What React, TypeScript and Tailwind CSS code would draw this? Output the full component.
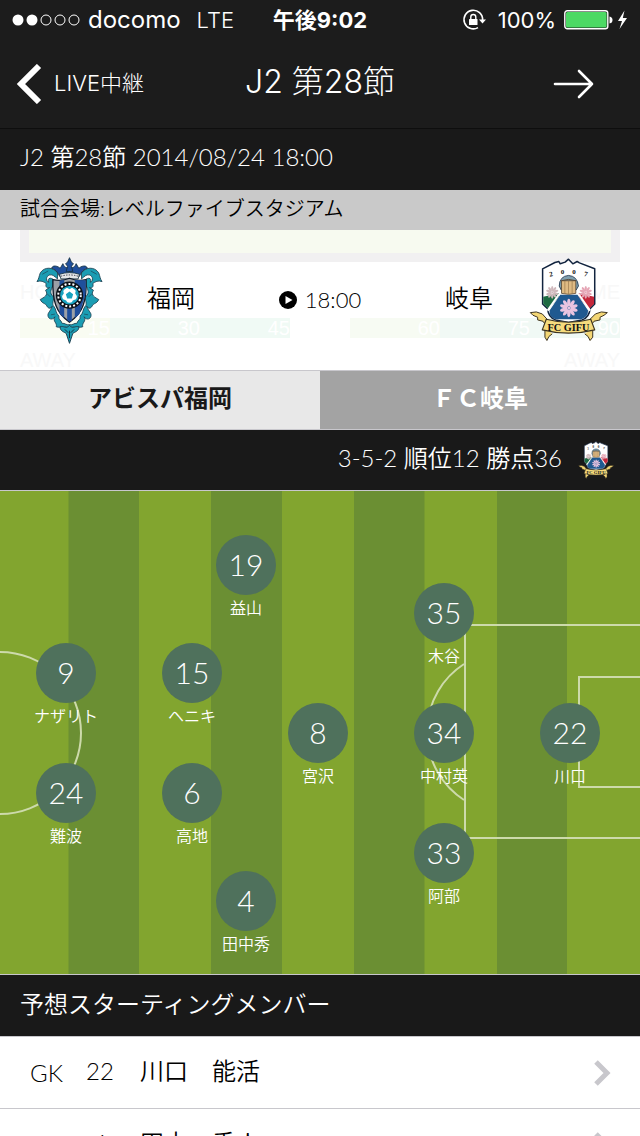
import { useState } from 'react';
import clsx from 'clsx';

interface Player {
  number: number;
  name: string;
  // position on the 640x483 pitch
  x: number;
  y: number;
}

const PITCH_WIDTH = 640;
const PITCH_HEIGHT = 483;

const PLAYERS: Player[] = [
  { number: 19, name: '益山', x: 246, y: 74 },
  { number: 35, name: '木谷', x: 444, y: 122 },
  { number: 9, name: 'ナザリト', x: 66, y: 182 },
  { number: 15, name: 'ヘニキ', x: 192, y: 182 },
  { number: 8, name: '宮沢', x: 318, y: 242 },
  { number: 34, name: '中村英', x: 444, y: 242 },
  { number: 22, name: '川口', x: 570, y: 242 },
  { number: 24, name: '難波', x: 66, y: 302 },
  { number: 6, name: '高地', x: 192, y: 302 },
  { number: 33, name: '阿部', x: 444, y: 362 },
  { number: 4, name: '田中秀', x: 246, y: 410 },
];

const MEMBERS = [
  { position: 'GK', number: 22, name: '川口　能活' },
  { position: 'DF', number: 4, name: '田中　秀人' },
];

const TEAMS = ['アビスパ福岡', 'ＦＣ岐阜'];

const AVISPA_SIDE =
  'M112 66 C100 48 72 46 60 66 C56 76 56 84 50 92 C62 88 70 92 78 98 C74 108 82 114 88 110 L76 118 C86 134 70 140 60 146 C66 160 76 156 80 166 C86 176 94 172 96 166 C90 184 80 186 84 198 C88 208 100 206 104 198 C96 212 112 216 108 228 C118 232 124 226 130 232 C138 226 140 232 148 238 L148 222 C138 224 134 216 126 218 C122 206 114 208 116 196 C106 186 108 176 102 168 C92 160 104 146 98 136 C88 128 92 116 98 104 C106 94 100 82 90 82 C84 82 82 88 86 94 C76 92 76 76 88 72 C98 70 102 76 112 84 Z';

function AvispaCrest({ className }: { className?: string }) {
  return (
    <svg viewBox="48 18 200 262" className={className} role="img" aria-label="アビスパ福岡">
      {[false, true].map(mirrored => (
        <g key={String(mirrored)} transform={mirrored ? 'translate(296 0) scale(-1 1)' : undefined}>
          <path d={AVISPA_SIDE} fill="#1b9db3" stroke="#1c4254" strokeWidth="2.6" strokeLinejoin="round" />
          <path d="M94 52 C98 40 114 46 120 52 L128 38 C134 52 138 50 148 48 L148 76 L118 76 C112 62 104 54 94 52 Z" fill="#1f4f9c" stroke="#14303f" strokeWidth="2.5" />
          <path d="M66 70 L84 60 M80 128 L90 138 M92 192 L104 190" stroke="#1c4254" strokeWidth="2" />
        </g>
      ))}
      <path d="M148 20 L154 34 L160 38 L154 46 L158 62 L138 62 L142 46 L136 38 L142 34 Z" fill="#1f4f9c" stroke="#14303f" strokeWidth="2.5" />
      <path d="M118 70 Q148 60 178 70 L174 84 L122 84 Z" fill="#e4e6e7" stroke="#14303f" strokeWidth="2.5" />
      <path d="M122 76 Q148 68 174 76" stroke="#334" strokeWidth="3" strokeDasharray="4 4" fill="none" />
      <path d="M98 86 Q124 92 148 82 Q172 92 198 86 C200 148 190 186 148 214 C106 186 96 148 98 86 Z" fill="#9ba0a6" stroke="#101a28" strokeWidth="4" />
      <path d="M118 89 L132 87 L132 202 L118 188 Z M164 87 L197 88 L196 130 L178 190 L164 202 Z" fill="#1f4f9c" />
      <path d="M141 170 H155 V210 L148 213 L141 208 Z" fill="#1f4f9c" />
      <circle cx="148" cy="133" r="41" fill="#0c1118" />
      <circle cx="148" cy="133" r="34" fill="none" stroke="#fff" strokeWidth="6" strokeDasharray="6 6" />
      <circle cx="148" cy="133" r="28" fill="#18a3c0" />
      <circle cx="148" cy="133" r="23" fill="#fff" />
      <path d="M148 122 L159 130 L155 143 L141 143 L137 130 Z M148 106 L158 109 L148 115 L138 109 Z M122 128 L128 117 L131 127 L125 137 Z M174 128 L168 117 L165 127 L171 137 Z M133 154 L129 145 L138 149 L143 158 Z M163 154 L167 145 L158 149 L153 158 Z" fill="#18a3c0" />
      <path d="M120 228 C130 224 138 236 148 224 C158 236 166 224 176 228 C178 240 164 244 158 248 L148 278 L138 248 C132 244 118 240 120 228 Z" fill="#1b9db3" stroke="#1c4254" strokeWidth="3" />
      <path d="M134 236 L144 246 M162 236 L152 246 M148 240 V262" stroke="#14303f" strokeWidth="3" />
    </svg>
  );
}

const PETALS = [0, 36, 72, 108, 144, 180, 216, 252, 288, 324];

function Flower({ x, y, size, color }: { x: number; y: number; size: number; color: string }) {
  return (
    <g transform={`translate(${x} ${y}) scale(${size})`}>
      {PETALS.map(angle => (
        <ellipse key={angle} cx="0" cy="-7" rx="2.2" ry="5" fill={color} transform={`rotate(${angle})`} />
      ))}
      <circle r="2" fill={color} />
    </g>
  );
}

function GifuCrest({ className }: { className?: string }) {
  return (
    <svg viewBox="30 28 238 252" className={className} role="img" aria-label="FC岐阜">
      <path d="M71 60 L108 41 L120 38 L124 45 L139 40 L149 31 L162 45 L175 38 L182 42 L228 60 L228 166 L214 180 Q212 206 190 214 L149 222 L110 214 Q88 206 86 180 L71 166 Z" fill="#fff" stroke="#12243f" strokeWidth="4.5" strokeLinejoin="round" />
      <path d="M73 144 L120 134 L120 144 L90 182 L73 165 Z" fill="#1e6b43" />
      <path d="M226 144 L180 134 L180 144 L210 182 L226 165 Z" fill="#c4263a" />
      <path d="M124 138 H176 L208 186 Q208 206 188 212 H110 Q90 206 92 186 Z" fill="#205990" />
      <path d="M121 136 L86 186 M179 136 L214 186" stroke="#fff" strokeWidth="6" />
      <Flower x={100} y={131} size={1.6} color="#cfb8bc" />
      <Flower x={201} y={131} size={1.6} color="#e5a5b5" />
      <Flower x={150} y={178} size={2.3} color="#eac4e0" />
      <path d="M121 112 Q122 82 149 80 Q176 82 179 112 L172 124 H127 Z" fill="#7f9fae" stroke="#19304a" strokeWidth="2.5" />
      <path d="M128 96 H171 V134 Q150 140 128 134 Z" fill="#dfba83" stroke="#5d4a34" strokeWidth="2.5" />
      <path d="M138 96 V135 M149 96 V136 M160 96 V135" stroke="#98764b" strokeWidth="2" />
      <path d="M127 96 Q149 88 172 96" stroke="#5d4a34" strokeWidth="3" fill="none" />
      <g fontFamily='"Liberation Serif", serif' fontWeight="700" fontSize="21" fill="#111">
        <text x="91" y="83" transform="rotate(-12 96 76)">2</text>
        <text x="126" y="75">0</text>
        <text x="160" y="75">0</text>
        <text x="196" y="83" transform="rotate(12 201 76)">7</text>
      </g>
      <path d="M34 192 L52 190 L70 196 L90 218 L78 226 L72 218 L56 214 L56 206 L42 200 Z M266 192 L248 190 L230 196 L208 218 L220 226 L226 218 L244 214 L244 206 L256 200 Z" fill="#f3d675" stroke="#3c3320" strokeWidth="3" strokeLinejoin="round" />
      <path d="M78 238 L78 266 L84 276 L90 264 L100 256 M222 238 L222 266 L214 276 L208 264 L198 256" fill="#f3d675" stroke="#3c3320" strokeWidth="3" strokeLinejoin="round" />
      <path d="M82 212 Q149 230 216 212 L228 244 Q149 264 70 244 Z" fill="#f5db7d" stroke="#3c3320" strokeWidth="3.5" strokeLinejoin="round" />
      <text x="149" y="248" textAnchor="middle" fontFamily='"Liberation Serif", serif' fontWeight="700" fontSize="31" fill="#111">
        FC GIFU
      </text>
    </svg>
  );
}

function StatusBar() {
  return (
    <div className="grid h-10 grid-cols-[1fr_auto_1fr] items-center px-3 font-['Inter','Noto_Sans_CJK_JP',sans-serif] text-[22px] leading-10">
      <div className="flex items-center gap-2">
        <svg className="h-3 w-[68px]" viewBox="0 0 68 12" fill="none" stroke="#fff">
          <circle cx="6" cy="6" r="5.5" fill="#fff" stroke="none" />
          <circle cx="20" cy="6" r="5.5" fill="#fff" stroke="none" />
          <circle cx="34" cy="6" r="5" />
          <circle cx="48" cy="6" r="5" />
          <circle cx="62" cy="6" r="5" />
        </svg>
        <span className="text-2xl leading-10">docomo</span>
        <span className="pl-2 font-light">LTE</span>
      </div>
      <span className="font-bold">午後9:02</span>
      <div className="flex items-center justify-end gap-2">
        <svg className="mr-1 h-6 w-6" viewBox="0 0 24 24" fill="none">
          <path d="M20.6 12 A9.3 9.3 0 1 0 16 19.6" stroke="#fff" strokeWidth="1.6" />
          <path d="M17 11.5 H24 L20.5 15.5 Z" fill="#fff" />
          <rect x="7" y="11" width="8.5" height="6" rx="0.6" fill="#fff" />
          <path d="M8.8 11 V9 a2.5 2.5 0 0 1 5 0 V11" stroke="#fff" strokeWidth="1.4" />
        </svg>
        <span>100%</span>
        <svg className="h-5 w-16" viewBox="0 0 64 20">
          <rect x="0.8" y="0.8" width="43" height="18" rx="2.5" fill="none" stroke="#fff" strokeWidth="1.4" />
          <rect x="2" y="2" width="40.6" height="15.6" rx="1.5" fill="#4cd964" />
          <path d="M45.5 6.5 Q48.5 7 48.5 10 Q48.5 13 45.5 13.5 Z" fill="#fff" />
          <path d="M60.5 0.5 L54 11 H58 L55.5 19 L63 8 H58.8 Z" fill="#fff" />
        </svg>
      </div>
    </div>
  );
}

function NavBar() {
  return (
    <nav className="grid h-[88px] grid-cols-[1fr_auto_1fr] items-center px-4 font-['Inter','Noto_Sans_CJK_JP',sans-serif] font-light">
      <a href="#live" className="flex items-center gap-3 text-[22px]">
        <svg className="h-10 w-[26px]" viewBox="0 0 26 40" fill="none" stroke="#fff" strokeWidth="6">
          <path d="M23 2 L5 20 L23 38" />
        </svg>
        LIVE中継
      </a>
      <h1 className="pb-1 text-[32px] leading-10 font-light">J2 第28節</h1>
      <button type="button" aria-label="次へ" className="mr-7 justify-self-end">
        <svg className="h-8 w-11" viewBox="0 0 44 32" fill="none" stroke="#fff" strokeWidth="2.6" strokeLinecap="round" strokeLinejoin="round">
          <path d="M3 16 H40 M27 3 L40 16 L27 29" />
        </svg>
      </button>
    </nav>
  );
}

function BackdropTimeline() {
  return (
    <div aria-hidden="true" className="absolute inset-0 overflow-hidden px-5 font-['Liberation_Sans',sans-serif] text-xl leading-5">
      <div className="h-8 border-x-9 border-b-9 border-[#f1f0f1] bg-[#f7faf0]" />
      <div className="flex justify-between pt-5 text-[#f8f8f8]">
        <span>HOME</span>
        <span>HOME</span>
      </div>
      <div className="flex justify-between pt-4 text-right text-white">
        <div className="flex w-[45%]">
          <span className="w-1/3 bg-[#f9fcf2]">15</span>
          <span className="w-1/3 bg-[#f2faf5]">30</span>
          <span className="w-1/3 bg-[#f0faf5]">45</span>
        </div>
        <div className="flex w-[45%]">
          <span className="w-1/3 bg-[#f7fbf3]">60</span>
          <span className="w-1/3 bg-[#f1f9f5]">75</span>
          <span className="w-1/3 bg-[#f0f9f5]">90</span>
        </div>
      </div>
      <div className="flex justify-between pt-3 text-[#f8f8f8]">
        <span>AWAY</span>
        <span>AWAY</span>
      </div>
    </div>
  );
}

function MatchCard() {
  return (
    <section className="relative h-[140px] bg-white">
      <BackdropTimeline />
      <div className="relative flex h-full items-center justify-between pr-8 pl-9 font-[350]">
        <div className="flex items-center gap-11">
          <AvispaCrest className="h-[87px] w-[67px]" />
          <span className="pb-1">福岡</span>
        </div>
        <div className="flex items-center gap-2 text-[22px]">
          <svg className="h-[18px] w-[18px]" viewBox="0 0 18 18">
            <circle cx="9" cy="9" r="9" fill="#000" />
            <path d="M6.5 5 L13.5 9 L6.5 13 Z" fill="#fff" />
          </svg>
          <time>18:00</time>
        </div>
        <div className="flex items-center gap-9">
          <span className="pb-1">岐阜</span>
          <GifuCrest className="h-[84px] w-[79px]" />
        </div>
      </div>
    </section>
  );
}

function Pitch() {
  return (
    <section className="relative aspect-[640/483] w-full">
      <svg className="h-full w-full" viewBox="0 0 640 483" preserveAspectRatio="none">
        <rect width="640" height="483" fill="#82a52f" />
        <path d="M68.5 0 H139 V483 H68.5 Z M211 0 H282 V483 H211 Z M354 0 H424.5 V483 H354 Z M497 0 H567 V483 H497 Z" fill="#6b8f33" />
        <g fill="none" stroke="#cddaab" strokeWidth="2">
          <circle cx="0" cy="242" r="81" />
          <path d="M640 134 H465 V347 H640" />
          <path d="M640 186 H579 V296 H640" />
          <path d="M464 173 A81 81 0 0 0 464 309" />
        </g>
      </svg>
      {PLAYERS.map(player => (
        <div
          key={player.number}
          className="absolute flex w-24 -translate-x-1/2 -translate-y-[30px] flex-col items-center text-white"
          style={{
            left: `${(player.x / PITCH_WIDTH) * 100}%`,
            top: `${(player.y / PITCH_HEIGHT) * 100}%`,
          }}
        >
          <span className="flex h-[60px] w-[60px] items-center justify-center rounded-full bg-[#4f715c] pb-0.5 text-3xl font-light">
            {player.number}
          </span>
          <span className="text-base leading-[26px] font-[350]">{player.name}</span>
        </div>
      ))}
    </section>
  );
}

export default function App() {
  const [activeTeam, setActiveTeam] = useState(0);

  return (
    <div className="flex h-screen flex-col overflow-hidden bg-white font-['Lato','Noto_Sans_CJK_JP',sans-serif] text-2xl text-black">
      <header className="shrink-0 border-b border-[#0e0e0e] bg-[#1c1c1c] text-white">
        <StatusBar />
        <NavBar />
      </header>

      <main className="flex min-h-0 flex-1 flex-col *:shrink-0">
        <h2 className="h-[61px] bg-[#191919] px-5 leading-[56px] font-[350] text-white">J2 第28節 2014/08/24 18:00</h2>
        <p className="h-10 bg-[#c9c9c9] px-5 text-xl leading-9 font-[350]">試合会場:レベルファイブスタジアム</p>

        <MatchCard />

        <div role="tablist" className="grid h-[60px] grid-cols-2 border-y border-[#c8c7cc]">
          {TEAMS.map((team, index) => (
            <button
              key={team}
              type="button"
              role="tab"
              aria-selected={activeTeam === index}
              onClick={() => setActiveTeam(index)}
              className={clsx(
                'pb-1 font-bold',
                activeTeam === index ? 'bg-[#e8e8e8] text-[#191919]' : 'bg-[#a3a3a3] text-white'
              )}
            >
              {team}
            </button>
          ))}
        </div>

        <div className="flex h-[61px] items-center justify-end gap-4 border-b border-[#c8c7cc] bg-[#191919] pr-[26px] text-white">
          <span className="pb-1 font-[350]">3-5-2 順位12 勝点36</span>
          <GifuCrest className="h-[38px] w-[36px]" />
        </div>

        <Pitch />

        <h2 className="h-[63px] border-y border-[#c8c7cc] bg-[#191919] px-5 leading-[58px] font-[350] text-white">
          予想スターティングメンバー
        </h2>

        <ul>
          {MEMBERS.map(member => (
            <li key={member.number} className="border-b border-[#c8c7cc]">
              <a href={`#player-${member.number}`} className="flex h-[71px] items-center pr-7 pb-1 pl-[30px] font-[350]">
                <span className="w-14 pt-1">{member.position}</span>
                <span className="w-7 text-center">{member.number}</span>
                <span className="flex-1 pl-[26px]">{member.name}</span>
                <svg className="mt-1 h-7 w-5" viewBox="0 0 20 28" fill="none" stroke="#c8c7cc" strokeWidth="5">
                  <path d="M4 3 L15 14 L4 25" />
                </svg>
              </a>
            </li>
          ))}
        </ul>
      </main>
    </div>
  );
}
